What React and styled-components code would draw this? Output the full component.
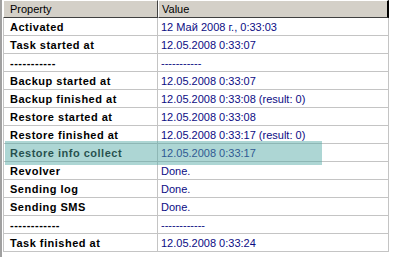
import React from 'react';
import styled, { createGlobalStyle } from 'styled-components';

const Global = createGlobalStyle`
  html, body { margin: 0; padding: 0; background: #ffffff; }
  body { font-family: Tahoma, "Liberation Sans", Arial, sans-serif; font-size: 11px; }
`;

const Frame = styled.div`
  display: flex;
  width: 395px;
  height: 257px;
  background: #ffffff;
`;

const Edge = styled.div`
  width: 2px;
  background: #a0a0a0;
  margin-right: 1px;
`;

const Grid = styled.div`
  position: relative;
  width: 386px;
  display: grid;
  grid-template-columns: 155px 231px;
  grid-auto-rows: 18px;
  align-content: start;
`;

const Head = styled.div`
  box-sizing: border-box;
  background: #d4d0c8;
  border-top: 1px solid #ffffff;
  border-left: 1px solid #ffffff;
  border-bottom: 1px solid #404040;
  border-right: ${p => (p.$last ? '2px solid #000000' : '1px solid #404040')};
  padding-left: ${p => (p.$last ? '3px' : '6px')};
  display: flex;
  align-items: center;
  color: #000000;
`;

const Cell = styled.div`
  box-sizing: border-box;
  border-bottom: 1px solid #c4c4c4;
  border-right: 1px solid #c4c4c4;
  border-left: ${p => (p.$first ? '1px solid #c4c4c4' : 'none')};
  padding-left: ${p => (p.$first ? '6px' : '3px')};
  padding-top: 1px;
  display: flex;
  align-items: center;
  white-space: nowrap;
  font-weight: ${p => (p.$first ? 'bold' : 'normal')};
  color: ${p => (p.$first ? '#000000' : '#0c0c84')};
  letter-spacing: ${p => (p.$first ? '0.5px' : '0')};
`;

const Highlight = styled.div`
  position: absolute;
  left: 2px;
  top: 141px;
  width: 317px;
  height: 24px;
  background: rgba(80, 168, 164, 0.47);
  pointer-events: none;
`;

const rows = [
  ['Activated', '12 Май 2008 г., 0:33:03'],
  ['Task started at', '12.05.2008 0:33:07'],
  ['-----------', '-----------'],
  ['Backup started at', '12.05.2008 0:33:07'],
  ['Backup finished at', '12.05.2008 0:33:08 (result: 0)'],
  ['Restore started at', '12.05.2008 0:33:08'],
  ['Restore finished at', '12.05.2008 0:33:17 (result: 0)'],
  ['Restore info collect', '12.05.2008 0:33:17'],
  ['Revolver', 'Done.'],
  ['Sending log', 'Done.'],
  ['Sending SMS', 'Done.'],
  ['------------', '------------'],
  ['Task finished at', '12.05.2008 0:33:24'],
];

export default function App() {
  return (
    <>
      <Global />
      <Frame>
        <Edge />
        <Grid>
          <Head>Property</Head>
          <Head $last>Value</Head>
          {rows.map(([k, v], i) => (
            <React.Fragment key={i}>
              <Cell $first>{k}</Cell>
              <Cell>{v}</Cell>
            </React.Fragment>
          ))}
          <Highlight />
        </Grid>
      </Frame>
    </>
  );
}
